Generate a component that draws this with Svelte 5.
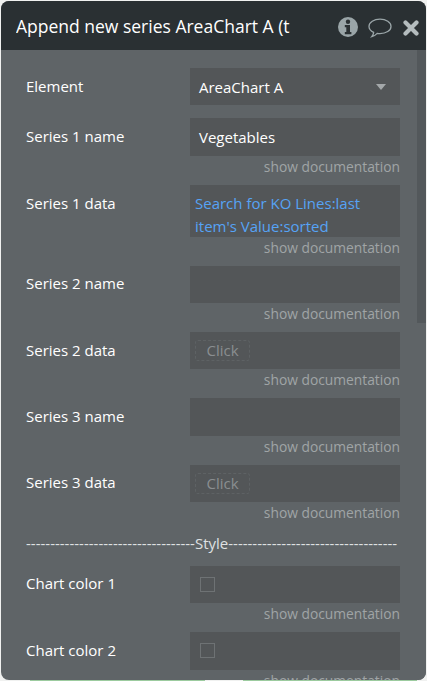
<script>
	const seriesRows = [
		{ label: "Series 2 name", kind: "text" },
		{ label: "Series 2 data", kind: "click" },
		{ label: "Series 3 name", kind: "text" },
		{ label: "Series 3 data", kind: "click" },
	];
</script>

<div class="panel">
	<div class="header">
		<div class="title">Append new series AreaChart A (t</div>
		<svg class="icon info" width="20" height="20" viewBox="0 0 20 20">
			<circle cx="10" cy="10" r="10" fill="#9aa5a8" />
			<circle cx="10" cy="4.8" r="2.2" fill="#2a3033" />
			<path d="M6.8 8h5.2v7h1.4v2.2H6.8V15h1.5v-4.8H6.8z" fill="#2a3033" />
		</svg>
		<svg class="icon bubble" width="24" height="20" viewBox="0 0 24 20">
			<path d="M12 1.2c6 0 11 3 11 7.2s-5 7.2-11 7.2c-1 0-1.900-.1-2.800-.2-1.200 1.300-3 2.600-5.400 3.200 1-1.100 1.700-2.400 1.900-4.300C2.900 12.900 1 10.800 1 8.400 1 4.200 6 1.200 12 1.200z" fill="none" stroke="#9aa5a8" stroke-width="1.300" />
		</svg>
		<svg class="icon close" width="16" height="16" viewBox="0 0 16 16">
			<path d="M2.500 2.500l11 11M13.500 2.500l-11 11" stroke="#b4bcbe" stroke-width="4.200" stroke-linecap="round" />
		</svg>
	</div>

	<div class="body">
		<div class="content">
			<div class="row first">
				<div class="label">Element</div>
				<div class="field dropdown">
					<span>AreaChart A</span>
					<span class="caret"></span>
				</div>
			</div>

			<div class="row">
				<div class="label">Series 1 name</div>
				<div class="field"><span>Vegetables</span></div>
			</div>
			<div class="doc">show documentation</div>

			<div class="row top">
				<div class="label">Series 1 data</div>
				<div class="field dynamic">Search for KO Lines:last item's Value:sorted</div>
			</div>
			<div class="doc">show documentation</div>

			{#each seriesRows as r}
				<div class="row">
					<div class="label">{r.label}</div>
					<div class="field">
						{#if r.kind === "click"}
							<span class="click">Click</span>
						{/if}
					</div>
				</div>
				<div class="doc">show documentation</div>
			{/each}

			<div class="divider">-----------------------------------Style-----------------------------------</div>

			<div class="row">
				<div class="label">Chart color 1</div>
				<div class="field"><span class="swatch"></span></div>
			</div>
			<div class="doc">show documentation</div>

			<div class="row">
				<div class="label">Chart color 2</div>
				<div class="field"><span class="swatch"></span></div>
			</div>
			<div class="doc">show documentation</div>
		</div>

		<div class="scrollbar"><div class="thumb"></div></div>
	</div>
</div>
<div class="behind">
	<span class="line one"></span>
	<span class="line two"></span>
</div>

<style>
	:global(body) {
		margin: 0;
		background: #f0f1f0;
		overflow: hidden;
	}
	.panel {
		width: 425px;
		height: 679px;
		margin: 1px 1px 0;
		border-radius: 8px;
		overflow: hidden;
		background: #5f6467;
		font-family: "Open Sans", sans-serif;
		font-size: 15px;
		color: #fff;
		display: flex;
		flex-direction: column;
	}
	.behind {
		display: flex;
		height: 1px;
		padding-left: 30px;
	}
	.line {
		height: 1px;
		background: #9ccb9f;
	}
	.line.one {
		width: 175px;
		margin-right: 38px;
	}
	.line.two {
		width: 174px;
	}
	.header {
		height: 49px;
		flex: none;
		background: #2a3033;
		display: flex;
		align-items: center;
		padding: 0 7px 0 15px;
	}
	.title {
		flex: 1;
		font-size: 17.5px;
		white-space: nowrap;
		overflow: hidden;
	}
	.icon {
		flex: none;
	}
	.info {
		margin-right: 10px;
		margin-top: 3px;
	}
	.bubble {
		margin-right: 11px;
		margin-top: 5px;
	}
	.close {
		margin-top: 4px;
	}
	.body {
		flex: 1;
		min-height: 0;
		display: flex;
		overflow: hidden;
	}
	.content {
		flex: 1;
		padding: 18px 18px 0 25px;
		min-width: 0;
	}
	.row {
		display: flex;
		align-items: center;
	}
	.row.top {
		align-items: flex-start;
	}
	.row.top .label {
		padding-top: 8px;
		padding-bottom: 0;
	}
	.row.first {
		margin-bottom: 12.8px;
	}
	.label {
		width: 164px;
		flex: none;
		padding-bottom: 2px;
	}
	.field {
		width: 210px;
		flex: none;
		min-height: 37.400px;
		background: #535658;
		display: flex;
		align-items: center;
		padding-left: 9px;
		box-sizing: border-box;
	}
	.dropdown {
		justify-content: space-between;
		padding-right: 14px;
	}
	.caret {
		width: 0;
		height: 0;
		border-left: 5.500px solid transparent;
		border-right: 5.500px solid transparent;
		border-top: 6px solid #a4a8aa;
	}
	.dynamic {
		color: #56a3f5;
		line-height: 23px;
		padding: 7px 30px 0 5px;
		height: 52px;
		display: block;
	}
	.doc {
		width: 374px;
		height: 29px;
		line-height: 21px;
		font-size: 13.8px;
		text-align: right;
		color: #a0a4a6;
	}
	.click {
		margin-left: -4px;
		width: 55px;
		height: 21px;
		box-sizing: border-box;
		border: 1px dashed #5e6264;
		border-radius: 3px;
		color: #8a8e90;
		line-height: 19px;
		text-align: center;
	}
	.swatch {
		width: 15px;
		height: 15px;
		margin-left: 1px;
		box-sizing: border-box;
		border: 1px solid #6e7274;
	}
	.divider {
		width: 374px;
		height: 34.6px;
		line-height: 24px;
		color: #dfe1e2;
		white-space: nowrap;
		overflow: hidden;
	}
	.scrollbar {
		width: 9px;
		flex: none;
		background: #5f6467;
	}
	.thumb {
		height: 273px;
		background: #53585b;
	}
</style>
